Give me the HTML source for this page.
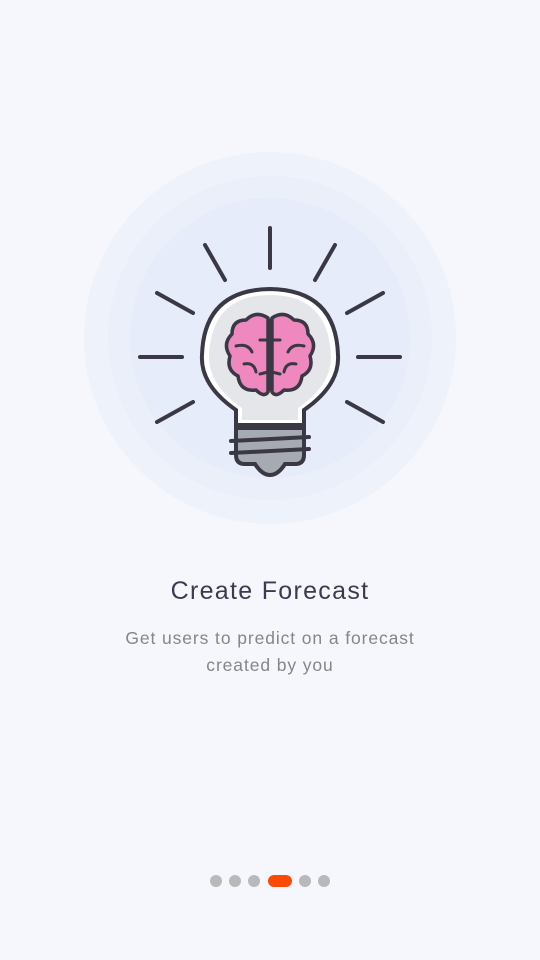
<!DOCTYPE html>
<html><head><style>
body{margin:0;width:540px;height:960px;background:#f6f7fc;font-family:"Liberation Sans",sans-serif;position:relative;overflow:hidden}
h1{position:absolute;top:577px;left:0;width:540px;text-align:center;margin:0;font-size:25px;font-weight:500;color:#3c3a52;letter-spacing:1.3px}
p{position:absolute;top:625px;left:0;width:540px;text-align:center;margin:0;font-size:17.5px;line-height:27px;color:#85848f;letter-spacing:0.9px}
.d{position:absolute;top:875px;width:12px;height:12px;border-radius:6px;background:#b9b9bb}
</style></head><body>
<svg width="540" height="560" style="position:absolute;top:0;left:0">
<circle cx="270" cy="338" r="186" fill="#eef2fb"/>
<circle cx="270" cy="338" r="162" fill="#eaeffa"/>
<circle cx="270" cy="338" r="140" fill="#e6ecf9"/>
<g stroke="#3a3845" stroke-width="4" stroke-linecap="round" fill="none">
<line x1="270" y1="228" x2="270" y2="268"/>
<line x1="205" y1="245" x2="225" y2="280"/>
<line x1="335" y1="245" x2="315" y2="280"/>
<line x1="157" y1="293" x2="193" y2="313"/>
<line x1="383" y1="293" x2="347" y2="313"/>
<line x1="140" y1="357" x2="182" y2="357"/>
<line x1="358" y1="357" x2="400" y2="357"/>
<line x1="157" y1="422" x2="193" y2="402"/>
<line x1="383" y1="422" x2="347" y2="402"/>
</g>
<path d="M236 428 L236 455 Q236 464 245 464 L255 464 Q262 475 270 475 Q278 475 285 464 L295 464 Q304 464 304 455 L304 428 Z" fill="#a6abb3" stroke="#3a3845" stroke-width="4"/>
<path d="M236 425 L236 410 Q200 385 202 355 Q204 290 270 289 Q336 290 338 355 Q340 385 304 410 L304 425 Z" fill="#fff" stroke="#3a3845" stroke-width="4"/>
<path d="M242 420 L242 408 Q208 385 209 355 Q212 295 270 295 Q328 295 331 355 Q332 385 298 408 L298 420 Z" fill="#e4e6ea"/>
<path d="M236 425 L304 425" stroke="#3a3845" stroke-width="4"/>
<g stroke="#3a3845" stroke-width="4" stroke-linecap="round">
<line x1="231" y1="441" x2="309" y2="437"/>
<line x1="231" y1="453" x2="309" y2="449"/>
</g>
<path d="M268 318 Q256 310 246 320 Q232 320 232 334 Q222 344 230 356 Q226 370 238 376 Q240 392 256 390 Q264 398 268 392 Z M272 318 Q284 310 294 320 Q308 320 308 334 Q318 344 310 356 Q314 370 302 376 Q300 392 284 390 Q276 398 272 392 Z" fill="#ee88bf" stroke="#3a3845" stroke-width="3.5" stroke-linejoin="round"/>
<g stroke="#3a3845" stroke-width="3" stroke-linecap="round" fill="none">
<path d="M268 340 L260 340 M268 372 L260 374 M272 340 L280 340 M272 372 L280 374 M270 320 L270 390"/>
<path d="M236 346 Q248 343 252 352 M304 346 Q292 343 288 352 M244 364 Q254 362 256 372 M296 364 Q286 362 284 372"/>
</g>
</svg>
<h1>Create Forecast</h1>
<p>Get users to predict on a forecast<br>created by you</p>
<div class="d" style="left:210px"></div>
<div class="d" style="left:229px"></div>
<div class="d" style="left:248px"></div>
<div class="d" style="left:268px;width:24px;background:#fb4a06"></div>
<div class="d" style="left:299px"></div>
<div class="d" style="left:318px"></div>
</body></html>
